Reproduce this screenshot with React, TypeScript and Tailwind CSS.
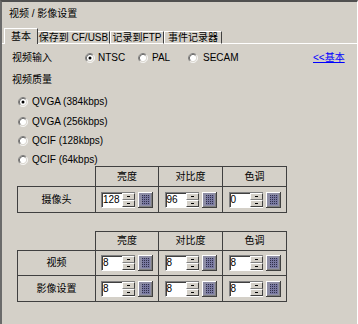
import React from "react";

const FONT =
  "font-['Liberation_Sans_Narrow','Liberation_Sans','Noto_Sans_CJK_SC',sans-serif]";

function Radio({ checked }: { checked?: boolean }) {
  return (
    <svg width="10" height="10" viewBox="0 0 12 12" className="shrink-0">
      <circle cx="6" cy="6" r="4.5" fill="#fff" />
      <path d="M2.11 9.89 A5.5 5.5 0 0 1 9.89 2.11" stroke="#808080" fill="none" />
      <path d="M9.89 2.11 A5.5 5.5 0 0 1 2.11 9.89" stroke="#fff" fill="none" />
      <path d="M2.82 9.18 A4.5 4.5 0 0 1 9.18 2.82" stroke="#404040" fill="none" />
      <path d="M9.18 2.82 A4.5 4.5 0 0 1 2.82 9.18" stroke="#d4d0c8" fill="none" />
      {checked && <circle cx="6" cy="6" r="1.8" fill="#000" />}
    </svg>
  );
}

function GridButton() {
  const lines = [4, 6, 8, 10];
  return (
    <svg width="15" height="16" viewBox="0 0 15 16" className="shrink-0">
      <rect x="0" y="0" width="15" height="16" fill="#8e8ea6" />
      <rect x="4" y="3" width="8" height="10" fill="#30304a" />
      {lines.map((x) => (
        <rect key={"v" + x} x={x + 1} y="3" width="1" height="10" fill="#7878a0" />
      ))}
      {[4, 6, 8, 10, 12].map((y) => (
        <rect key={"h" + y} x="4" y={y} width="8" height="1" fill="#7878a0" />
      ))}
      <rect x="0" y="0" width="15" height="1" fill="#fff" />
      <rect x="0" y="0" width="1" height="16" fill="#fff" />
      <rect x="14" y="0" width="1" height="16" fill="#404040" />
      <rect x="0" y="15" width="15" height="1" fill="#404040" />
      <rect x="13" y="1" width="1" height="14" fill="#808080" />
      <rect x="1" y="14" width="13" height="1" fill="#808080" />
    </svg>
  );
}

function SpinBox({ value }: { value: string }) {
  return (
    <div className="flex items-center">
      <div className="flex h-[16px] border-t border-l border-b border-t-[#808080] border-l-[#808080] border-b-white">
        <div className="w-[20px] h-full bg-white pl-[1px] text-[10px] leading-[14px] shadow-[inset_1px_1px_0_#404040]">
          {value}
        </div>
        <div className="flex flex-col w-[13px] h-full">
          <div className="flex-1 flex items-center justify-center bg-[#d4d0c8] border border-t-white border-l-white border-r-[#404040] border-b-[#808080]">
            <span className="block w-[3px] h-px bg-black" />
          </div>
          <div className="flex-1 flex items-center justify-center bg-[#d4d0c8] border border-t-white border-l-white border-r-[#404040] border-b-[#404040]">
            <span className="block w-[3px] h-px bg-black" />
          </div>
        </div>
      </div>
      <div className="ml-[3px]">
        <GridButton />
      </div>
    </div>
  );
}

type Row = { label: string; values: string[]; h: string };

function ParamTable({ head, rows }: { head: string; rows: Row[] }) {
  const widths = ["w-[63px]", "w-[64px]", "w-[65px] border-r"];
  return (
    <div className="ml-[15px]">
      <div className="flex">
        <div className="w-[78px]" />
        {["亮度", "对比度", "色调"].map((t, i) => (
          <div
            key={t}
            className={`${head} ${widths[i]} border-t border-l border-[#404040] flex items-center justify-center`}
          >
            {t}
          </div>
        ))}
      </div>
      {rows.map((r, ri) => (
        <div key={r.label} className="flex">
          <div
            className={`${r.h} w-[78px] border-t border-l border-[#404040] flex items-center justify-center ${
              ri === rows.length - 1 ? "border-b" : ""
            }`}
          >
            {r.label}
          </div>
          {r.values.map((v, i) => (
            <div
              key={i}
              className={`${r.h} ${widths[i]} border-t border-l border-[#404040] flex items-center justify-center ${
                ri === rows.length - 1 ? "border-b" : ""
              }`}
            >
              <SpinBox value={v} />
            </div>
          ))}
        </div>
      ))}
    </div>
  );
}

export default function App() {
  return (
    <div
      className={`w-[358px] h-[324px] overflow-hidden bg-[#d4d0c8] border-t-2 border-l-2 border-r border-t-[#505050] border-l-[#6a6a6a] border-r-white text-black text-[10px] leading-[12px] ${FONT}`}
    >
      <div className="pl-[7px] pt-[6px]">视频 / 影像设置</div>

      {/* tabs */}
      <div className="mt-[8px] flex items-end h-[16px]">
        <div className="w-[2px] h-px bg-white" />
        <div className="w-[34px] h-[16px] border-t border-l border-r border-t-white border-l-white border-r-[#404040] flex items-center justify-center pt-[1px]">
          基本
        </div>
        <div className="w-[72px] h-[13px] border-t border-b border-r border-t-white border-b-white border-r-[#404040] flex items-center justify-center">
          保存到 CF/USB
        </div>
        <div className="w-[54px] h-[13px] border-t border-b border-r border-l border-t-white border-b-white border-l-white border-r-[#404040] flex items-center justify-center">
          记录到FTP
        </div>
        <div className="w-[58px] h-[13px] border-t border-b border-r border-l border-t-white border-b-white border-l-white border-r-[#404040] flex items-center justify-center">
          事件记录器
        </div>
        <div className="flex-1 h-px bg-white" />
      </div>

      {/* video input */}
      <div className="mt-[6px] h-[16px] flex items-center pl-[10px]">
        <div className="w-[73px]">视频输入</div>
        <div className="w-[53px] flex items-center gap-[3px]">
          <Radio checked />
          <span>NTSC</span>
        </div>
        <div className="w-[50px] flex items-center gap-[4px]">
          <Radio />
          <span>PAL</span>
        </div>
        <div className="w-[125px] flex items-center gap-[5px]">
          <Radio />
          <span>SECAM</span>
        </div>
        <span className="text-[#0000ff] underline">&lt;&lt;基本</span>
      </div>

      <div className="mt-[6px] h-[16px] flex items-center pl-[10px]">视频质量</div>

      {/* quality */}
      <div className="mt-[8px] flex flex-col pl-[16px]">
        {[
          ["QVGA (384kbps)", true, ""],
          ["QVGA (256kbps)", false, "mt-[8px]"],
          ["QCIF (128kbps)", false, "mt-[7px]"],
          ["QCIF (64kbps)", false, "mt-[7px]"],
        ].map(([t, c, m]) => (
          <div key={t as string} className={`h-[12px] flex items-center gap-[4px] ${m}`}>
            <Radio checked={c as boolean} />
            <span>{t as string}</span>
          </div>
        ))}
      </div>

      <ParamTable
        head="h-[20px]"
        rows={[{ label: "摄像头", values: ["128", "96", "0"], h: "h-[27px]" }]}
      />

      <div className="mt-[18px]">
        <ParamTable
          head="h-[19px]"
          rows={[
            { label: "视频", values: ["8", "8", "8"], h: "h-[25px]" },
            { label: "影像设置", values: ["8", "8", "8"], h: "h-[27px]" },
          ]}
        />
      </div>
    </div>
  );
}
